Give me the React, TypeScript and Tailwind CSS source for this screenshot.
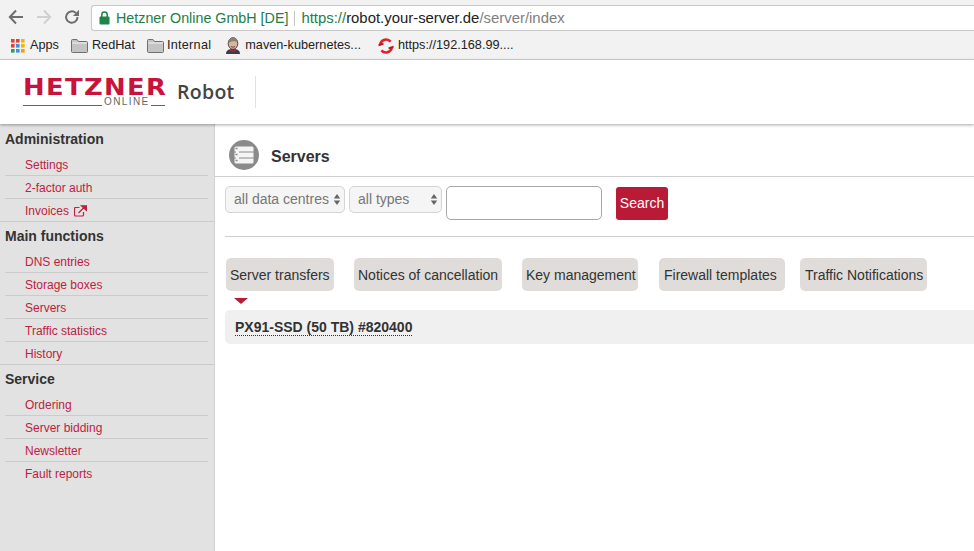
import React from "react";

const Folder = () => (
  <svg width="17" height="14" viewBox="0 0 17 14" className="shrink-0">
    <path d="M.5 12.5V1.5q0-1 1-1h4.5l1.5 2h8q1 0 1 1v9q0 1-1 1h-14q-1 0-1-1z" fill="#c4c4c4" stroke="#6f6f6f" />
    <path d="M1 4h15" stroke="#f2f2f2" />
  </svg>
);

const AppsIcon = () => (
  <svg width="14" height="14" viewBox="0 0 14 14" className="shrink-0">
    {[
      ["#e0452f", "#e0452f", "#f4b400"],
      ["#e0452f", "#3f8fe8", "#f4b400"],
      ["#2f9e52", "#3f8fe8", "#f4a000"],
    ].map((row, y) =>
      row.map((c, x) => <rect key={`${x}${y}`} x={x * 5} y={y * 5} width="3.6" height="3.6" fill={c} />)
    )}
  </svg>
);

const Jenkins = () => (
  <svg width="16" height="17" viewBox="0 0 16 17" className="shrink-0">
    <path d="M1 17c0-4 3-5 7-5s7 1 7 5z" fill="#3a3d4a" />
    <path d="M6 12l2 2 2-2 1 2-3 1-3-1z" fill="#c0202a" />
    <ellipse cx="8" cy="6.5" rx="4.8" ry="5.8" fill="#d9b79c" stroke="#4d4038" strokeWidth="1" />
    <path d="M3.5 6C3 2 6 .6 8.5.6S13 3 12.5 5C10 4 7 3.5 3.5 6z" fill="#8b8078" />
    <path d="M6 9.5q2 1.5 4 0" stroke="#6b4a3a" fill="none" />
  </svg>
);

const OpenShift = () => (
  <svg width="16" height="16" viewBox="0 0 16 16" className="shrink-0">
    <path d="M2.2 6.2A6 6 0 0 1 12.6 3.6" fill="none" stroke="#e0202c" strokeWidth="2.6" />
    <path d="M13.8 9.8A6 6 0 0 1 3.4 12.4" fill="none" stroke="#e0202c" strokeWidth="2.6" />
    <path d="M.5 7.4l5-1.8M10.6 10.4l5-1.8" stroke="#b8141f" strokeWidth="1.8" />
  </svg>
);

const Bookmark = ({ icon, label, className }: { icon: React.ReactNode; label: string; className: string }) => (
  <div className={`flex items-center ${className}`}>
    {icon}
    <span className="ml-[4px]">{label}</span>
  </div>
);

const SideItem = ({ label, last, ext }: { label: string; last?: boolean; ext?: boolean }) => (
  <div className={`h-[23px] flex items-center ${last ? "" : "mx-[5px] w-[203px] pt-[2px] border-b border-[#cbcbcb]"}`}>
    <a className={`text-[12px] text-[#c0213f] flex items-center gap-[5px] ${last ? "pl-[25px]" : "pl-[20px]"}`}>
      {label}
      {ext && (
        <svg width="13" height="12" viewBox="0 0 13 12">
          <path d="M9.5 7v3a1 1 0 0 1-1 1h-7a1 1 0 0 1-1-1V3.500a1 1 0 0 1 1-1h4" fill="none" stroke="#c0213f" strokeWidth="1.200" />
          <path d="M4.500 8l6-6M7.500.8h5v4.600z" fill="#c0213f" stroke="#c0213f" strokeWidth="1.300" />
        </svg>
      )}
    </a>
  </div>
);

const SideGroup = ({ title, items, endLine, ext, headClass }: { title: string; items: string[]; endLine: boolean; ext?: string; headClass: string }) => (
  <div>
    <div className={`flex items-center pl-[5px] text-[14px] font-bold text-[#333] ${headClass}`}>{title}</div>
    {items.map((it, i) => {
      const last = i === items.length - 1;
      return (
        <div key={it} className={last && endLine ? "border-b border-[#cbcbcb] h-[23px]" : ""}>
          <SideItem label={it} last={last} ext={it === ext} />
        </div>
      );
    })}
  </div>
);

const Arrows = () => (
  <svg width="8" height="13" viewBox="0 0 8 13" className="shrink-0">
    <path d="M4 1L7.200 5.400H.8zM4 12L.8 7.600h6.400z" fill="#666" />
  </svg>
);

const Select = ({ label, className }: { label: string; className: string }) => (
  <div className={`h-[27px] flex items-center justify-between pl-[8px] pr-[3px] rounded-[5px] border border-[#d4d4d4] bg-[#f5f5f5] text-[14px] text-[#777] ${className}`}>
    <span>{label}</span>
    <Arrows />
  </div>
);

const Tab = ({ label, className }: { label: string; className: string }) => (
  <div className={`h-[33px] flex items-center pt-[2px] whitespace-nowrap rounded-[5px] bg-[#e0dcd9] text-[14px] text-[#333] ${className}`}>{label}</div>
);

export default function App() {
  return (
    <div className="w-[974px] h-[551px] overflow-hidden bg-white flex flex-col" style={{ fontFamily: '"Liberation Sans", Arial, sans-serif' }}>
      {/* Browser chrome */}
      <div className="h-[60px] shrink-0 bg-[#f2f2f2] border-b border-[#d2d2d2] flex flex-col">
        <div className="h-[33px] flex items-center">
          <div className="w-[91px] shrink-0 flex items-center pl-[8px] gap-[12px]">
            <svg width="16" height="16" viewBox="0 0 16 16" className="shrink-0">
              <path d="M15 8H2M8 1.500L1.800 8 8 14.500" fill="none" stroke="#6e6e6e" strokeWidth="2" />
            </svg>
            <svg width="16" height="16" viewBox="0 0 16 16" className="shrink-0">
              <path d="M1 8h13M8 1.500L14.200 8 8 14.500" fill="none" stroke="#d0d0d0" strokeWidth="2" />
            </svg>
            <svg width="16" height="16" viewBox="0 0 16 16" className="shrink-0">
              <path d="M13.500 8A5.700 5.700 0 1 1 11.800 4" fill="none" stroke="#6e6e6e" strokeWidth="2" />
              <path d="M15 .8V7H9z" fill="#6e6e6e" />
            </svg>
          </div>
          <div className="flex-1 h-[26px] mt-[3px] bg-white border border-[#c8c8c8] border-r-0 rounded-l-[3px] flex items-center whitespace-nowrap">
            <svg width="11" height="14" viewBox="0 0 11 14" className="ml-[7px] shrink-0">
              <rect x="0.500" y="5.500" width="10" height="8" rx="1" fill="#1e8449" />
              <path d="M2.800 6V3.800a2.700 2.700 0 0 1 5.400 0V6" fill="none" stroke="#1e8449" strokeWidth="1.500" />
            </svg>
            <span className="ml-[6px] mt-[2px] text-[14.300px] text-[#1e7e45]">Hetzner Online GmbH [DE]</span>
            <span className="mx-[6px] w-px h-[15px] bg-[#c4c4c4]" />
            <span className="text-[14.900px] text-[#1e7e45]">https://</span>
            <span className="text-[14.900px] text-[#222]">robot.your-server.de</span>
            <span className="text-[14.900px] text-[#808080]">/server/index</span>
          </div>
        </div>
        <div className="flex-1 flex items-center text-[12.700px] text-[#222] whitespace-nowrap">
          <Bookmark icon={<AppsIcon />} label="Apps" className="ml-[11px] [&>span]:ml-[5px]" />
          <Bookmark icon={<Folder />} label="RedHat" className="ml-[12px]" />
          <Bookmark icon={<Folder />} label="Internal" className="ml-[12px] [&>span]:ml-[3px] tracking-[0.250px]" />
          <Bookmark icon={<Jenkins />} label="maven-kubernetes..." className="ml-[14px]" />
          <Bookmark icon={<OpenShift />} label="https://192.168.99...." className="ml-[17px]" />
        </div>
      </div>

      {/* Site header */}
      <div className="h-[64px] shrink-0 bg-white flex items-center shadow-[0_1px_3px_rgba(0,0,0,0.35)] relative z-10">
        <div className="ml-[23px] w-[142px] flex flex-col shrink-0">
          <div className="text-[23.500px] leading-[18px] font-bold text-[#c8143c] tracking-[1.200px] whitespace-nowrap origin-left scale-x-[1.100]" style={{ fontFamily: '"DejaVu Sans", sans-serif' }}>HETZNER</div>
          <div className="flex items-end h-[11px]">
            <span className="h-px w-[79px] mb-[1px] bg-[#666]" />
            <span className="text-[10px] leading-[10px] tracking-[1.400px] text-[#666] ml-[2px] mr-[1px]">ONLINE</span>
            <span className="h-px flex-1 mb-[1px] bg-[#666]" />
          </div>
        </div>
        <div className="ml-[12px] text-[19.500px] font-semibold text-[#444] tracking-[0.300px]" style={{ fontFamily: '"Open Sans", sans-serif' }}>Robot</div>
        <div className="ml-[20px] w-px h-[32px] bg-[#e2e2e2]" />
      </div>

      <div className="flex-1 flex min-h-0">
        {/* Sidebar */}
        <div className="w-[215px] shrink-0 bg-[#e2e2e2] border-r border-[#d0d0d0]">
          <SideGroup title="Administration" items={["Settings", "2-factor auth", "Invoices"]} ext="Invoices" endLine headClass="h-[29px] pt-[2px]" />
          <SideGroup title="Main functions" items={["DNS entries", "Storage boxes", "Servers", "Traffic statistics", "History"]} endLine headClass="h-[28px]" />
          <SideGroup title="Service" items={["Ordering", "Server bidding", "Newsletter", "Fault reports"]} endLine={false} headClass="h-[28px]" />
        </div>

        {/* Main */}
        <div className="flex-1 min-w-0">
          <div className="h-[53px] border-b border-[#cfcfcf] flex items-start pt-[16px] pl-[14px]">
            <div className="w-[30px] h-[30px] rounded-full bg-[#8a8a8a] flex items-center justify-center">
              <svg width="20" height="18" viewBox="0 0 20 18">
                <rect x="0.500" y="0.500" width="19" height="17" rx="1.500" fill="#f4f4f4" />
                <path d="M5 6h15M5 12h15M0 6h2M0 12h2" stroke="#8a8a8a" strokeWidth="1" />
                <path d="M1.500 2.500h2M1.500 8.500h2M1.500 14.500h2" stroke="#8a8a8a" strokeWidth="1.400" />
              </svg>
            </div>
            <div className="ml-[12px] mt-[8px] text-[16px] leading-[18px] font-bold text-[#333]">Servers</div>
          </div>

          <div className="ml-[10px]">
            <div className="flex items-start pt-[9px] h-[60px] border-b border-[#cfcfcf]">
              <Select label="all data centres" className="w-[120px]" />
              <Select label="all types" className="w-[93px] ml-[4px]" />
              <div className="w-[156px] h-[34px] ml-[4px] bg-white rounded-[5px] border border-[#a8a8a8]" />
              <div className="w-[52px] h-[33px] ml-[14px] mt-[1px] rounded-[3px] bg-[#b91a35] text-white text-[14px] flex items-center justify-center">Search</div>
            </div>

            <div className="flex mt-[21px] ml-[1px]">
              <Tab label="Server transfers" className="w-[108px] pl-[4px]" />
              <Tab label="Notices of cancellation" className="w-[148px] ml-[20px] pl-[4px]" />
              <Tab label="Key management" className="w-[116px] ml-[20px] pl-[4px]" />
              <Tab label="Firewall templates" className="w-[126px] ml-[21px] pl-[5px]" />
              <Tab label="Traffic Notifications" className="w-[127px] ml-[15px] pl-[5px]" />
            </div>

            <div className="w-0 h-0 ml-[9px] mt-[7px] border-l-[7px] border-r-[7px] border-t-[6px] border-l-transparent border-r-transparent border-t-[#b91a35]" />

            <div className="mt-[6px] h-[34px] bg-[#f0f0f0] rounded-l-[5px] flex items-center pl-[10px]">
              <span className="text-[14px] leading-[16px] font-bold text-[#333] border-b border-dotted border-[#333]">PX91-SSD (50 TB) #820400</span>
            </div>
          </div>
        </div>
      </div>
    </div>
  );
}
